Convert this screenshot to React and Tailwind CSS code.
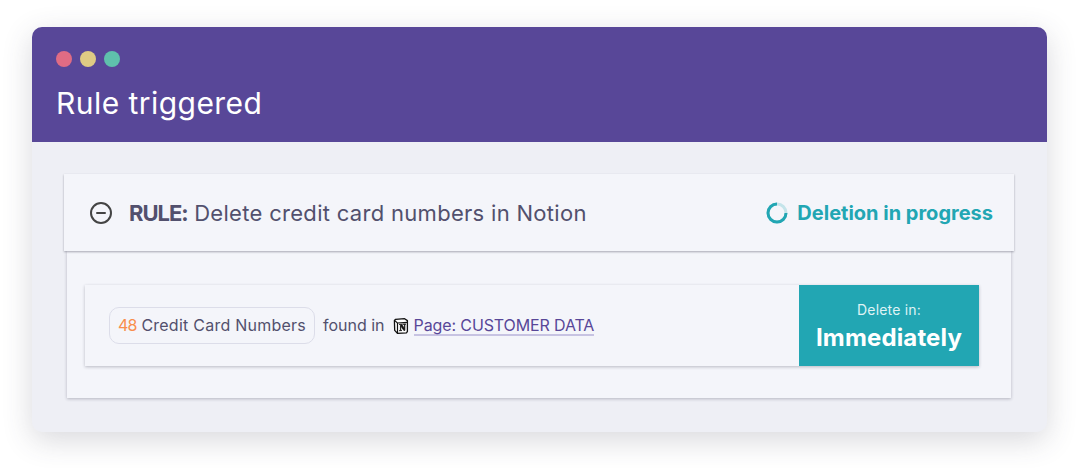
import React from 'react'

const NotionIcon = () => (
  <svg width="16" height="16" viewBox="0 0 16 16" className="shrink-0">
    <path d="M2.6 1.3 L11.6 0.7 L14.4 2.6 L14.4 13.4 L13.6 14.8 L4.4 15.3 L1.7 12.4 L1.4 2.4 Z" fill="#fff" stroke="#111" strokeWidth="1.3" strokeLinejoin="round" />
    <path d="M1.8 2.6 L4.4 5 L14.2 4.3" fill="none" stroke="#111" strokeWidth="1.2" />
    <path d="M4.5 5 L4.5 15" fill="none" stroke="#111" strokeWidth="1.2" />
    <path d="M6 6.4 L12.6 6 M6.2 6.4 L7.4 6.6 L7.4 12.4 L6.2 12.7 L8.9 12.6 L7.8 12.3 L7.8 8 L10.9 12.6 L11.9 12.4 L11.9 6.6 L12.8 6.2 L10.4 6.3 L11.4 6.6 L11.4 10.4 L8.6 6.2" fill="#111" stroke="#111" strokeWidth="0.7" strokeLinejoin="round" />
  </svg>
)

const App = () => {
  return (
    <div className="w-[1079px] h-[468px] bg-white pt-[27px] pl-[32px] overflow-hidden font-['Inter',sans-serif]">
      <div className="w-[1015px] h-[405px] rounded-[10px] bg-[#eeeff5] shadow-[0_8px_30px_rgba(60,60,80,0.2)] overflow-hidden">
        <div className="h-[115px] bg-[#584798] pt-[24px] pl-[24px]">
          <div className="flex gap-2">
            <div className="w-4 h-4 rounded-full bg-[#e06c84]" />
            <div className="w-4 h-4 rounded-full bg-[#dfcb84]" />
            <div className="w-4 h-4 rounded-full bg-[#5fc1ac]" />
          </div>
          <h1 className="mt-[17px] text-[30px] leading-[38px] text-white tracking-[0.45px]">Rule triggered</h1>
        </div>

        <div className="pl-[32px] pr-[33px] pt-[32px]">
          <div className="h-[77px] bg-[#f4f5fa] shadow-[0_1px_2px_rgba(50,50,70,0.4)] flex items-center justify-between pl-[26px] pr-[21px] relative z-10">
            <div className="flex items-center gap-[17px]">
              <svg width="22" height="22" viewBox="0 0 22 22" fill="none" stroke="#444" strokeWidth="2" strokeLinecap="round">
                <circle cx="11" cy="11" r="10" />
                <path d="M7 11 H15" />
              </svg>
              <p className="text-[22px] text-[#52506d] tracking-[0.3px] pt-[1px]">
                <span className="font-bold tracking-[-1px]">RULE:</span> Delete credit card numbers in Notion
              </p>
            </div>
            <div className="flex items-center gap-[9px]">
              <svg width="22" height="22" viewBox="0 0 22 22" fill="none" strokeWidth="3">
                <circle cx="11" cy="11" r="9" stroke="#c4e4ea" />
                <path d="M11 2 A9 9 0 1 0 20 11" stroke="#22a6b3" />
              </svg>
              <span className="text-[20px] font-bold text-[#22a6b3] pt-[1px]">Deletion in progress</span>
            </div>
          </div>

          <div className="mx-[3px] h-[147px] bg-[#f4f5fa] shadow-[0_1px_3px_rgba(50,50,70,0.3)] pt-[34px] pl-[18px] pr-[32px]">
            <div className="h-[81px] flex items-stretch shadow-[0_1px_3px_rgba(50,50,70,0.3)]">
              <div className="flex-1 flex items-center pl-[24px]">
                <div className="h-[37px] px-[8px] pb-[1px] flex items-center rounded-[10px] border border-[#dcdde9] text-[16px] text-[#52506d] tracking-[0.24px]">
                  <span className="text-[#f98e4c] tracking-[-0.8px]">48</span>&nbsp;Credit Card Numbers
                </div>
                <span className="ml-[8px] pb-[1px] text-[16px] text-[#52506d]">found in</span>
                <div className="ml-[8px] mr-[5px]"><NotionIcon /></div>
                <a className="text-[16px] text-[#584798] border-b-2 border-[#c7c3e2] leading-[18px] tracking-[-0.12px]">Page: CUSTOMER DATA</a>
              </div>
              <div className="w-[180px] bg-[#22a6b3] flex flex-col items-center justify-center text-white pt-[3px]">
                <span className="text-[14px] leading-[18px] text-[#dff3f5] tracking-[0.2px]">Delete in:</span>
                <span className="text-[24px] leading-[32px] font-bold mt-[3px] tracking-[0.15px]">Immediately</span>
              </div>
            </div>
          </div>
        </div>
      </div>
    </div>
  )
}

export default App
